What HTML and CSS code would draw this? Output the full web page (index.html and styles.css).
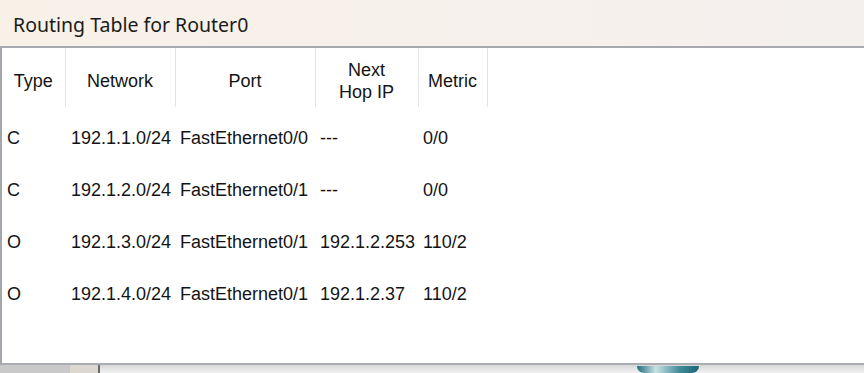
FILE: index.html
```html
<!DOCTYPE html>
<html lang="en">
<head>
    <meta charset="UTF-8">
    <meta name="viewport" content="width=device-width, initial-scale=1.0">
    <title>Routing Table for Router0</title>
    <link rel="stylesheet" href="styles.css">
</head>
<body>
    <div class="window">
        <div class="title-bar">Routing Table for Router0</div>

        <div class="table-pane">
            <table class="route-table">
                <colgroup>
                    <col class="col-type">
                    <col class="col-network">
                    <col class="col-port">
                    <col class="col-hop">
                    <col class="col-metric">
                    <col>
                </colgroup>
                <thead>
                    <tr>
                        <th>Type</th>
                        <th>Network</th>
                        <th>Port</th>
                        <th>Next<br>Hop IP</th>
                        <th>Metric</th>
                        <th class="filler"></th>
                    </tr>
                </thead>
                <tbody>
                    <tr>
                        <td>C</td>
                        <td>192.1.1.0/24</td>
                        <td>FastEthernet0/0</td>
                        <td>---</td>
                        <td>0/0</td>
                        <td></td>
                    </tr>
                    <tr>
                        <td>C</td>
                        <td>192.1.2.0/24</td>
                        <td>FastEthernet0/1</td>
                        <td>---</td>
                        <td>0/0</td>
                        <td></td>
                    </tr>
                    <tr>
                        <td>O</td>
                        <td>192.1.3.0/24</td>
                        <td>FastEthernet0/1</td>
                        <td>192.1.2.253</td>
                        <td>110/2</td>
                        <td></td>
                    </tr>
                    <tr>
                        <td>O</td>
                        <td>192.1.4.0/24</td>
                        <td>FastEthernet0/1</td>
                        <td>192.1.2.37</td>
                        <td>110/2</td>
                        <td></td>
                    </tr>
                </tbody>
            </table>
        </div>

        <!-- bit of the workspace peeking out under the dialog -->
        <div class="desk-strip">
            <div class="desk-grey"></div>
            <div class="desk-beige"></div>
            <div class="desk-rest">
                <div class="desk-device"></div>
            </div>
        </div>
    </div>
</body>
</html>
```

FILE: styles.css
```css
body {
    margin: 0;
    padding: 0;
    background-color: #ffffff;
    overflow: hidden;
}
.window {
    width: 864px;
    height: 373px;
    display: flex;
    flex-direction: column;
}
.title-bar {
    height: 48px;
    box-sizing: border-box;
    padding: 11px 0 0 13px;
    font-family: "Noto Sans", "Open Sans", sans-serif;
    font-size: 19.5px;
    color: #1b1b1b;
    background: linear-gradient(to right, #f8f1e8, #f4f0ee);
    border-bottom: 2px solid #a7abaf;
}
.table-pane {
    height: 315px;
    background: white;
    border-left: 2px solid #a3a6aa;
    border-bottom: 2px solid #a9acb0;
}
.route-table {
    border-collapse: collapse;
    table-layout: fixed;
    width: 862px;
    font-family: "Liberation Sans", Arial, sans-serif;
    font-size: 18px;
    color: #141414;
}
.col-type { width: 63px; }
.col-network { width: 110px; }
.col-port { width: 140px; }
.col-hop { width: 103px; }
.col-metric { width: 69px; }
.route-table th {
    height: 53px;
    padding: 6px 0 0 0;
    font-weight: normal;
    text-align: center;
    line-height: 22px;
    border-right: 1px solid #e4e4e4;
}
.route-table th.filler {
    border-right: none;
}
.route-table td {
    height: 42px;
    padding: 10px 0 0 5px;
    white-space: nowrap;
    overflow: hidden;
}
.route-table td:nth-child(2) {
    padding-left: 6px;
}
.desk-strip {
    flex: 1;
    display: flex;
    background: #ececec;
}
.desk-grey {
    width: 70px;
    background: #c9c9c9;
}
.desk-beige {
    width: 28px;
    background: #ddd8cf;
    border-right: 2px solid #6a6a6a;
}
.desk-rest {
    flex: 1;
    display: flex;
    padding-left: 537px;
    background: linear-gradient(#d8d8d8, #f0f0f0);
}
.desk-device {
    width: 62px;
    margin-top: 1px;
    border-radius: 0 0 30px 30px;
    background: linear-gradient(to right, #1f6c7a, #c9e1e6 30%, #3d8a98 70%, #1d6472);
}
```
